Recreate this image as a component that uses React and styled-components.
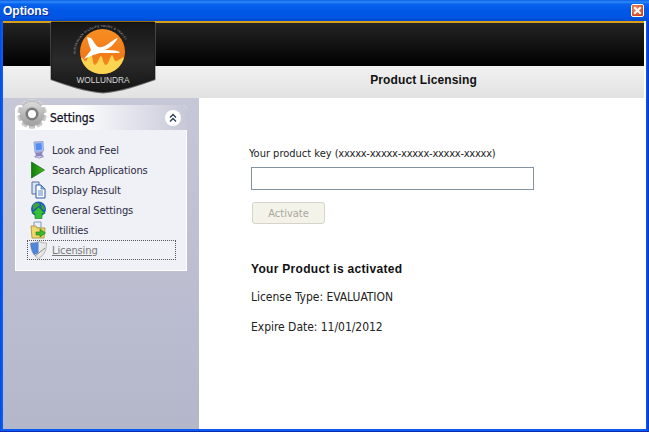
import React from "react";
import styled, { createGlobalStyle } from "styled-components";

const Global = createGlobalStyle`
  html, body { margin: 0; padding: 0; background: #fff; overflow: hidden; }
  * { box-sizing: border-box; }
`;
const Win = styled.div`
  width: 649px; height: 432px; display: flex; flex-direction: column; position: relative;
  font-family: "DejaVu Sans Condensed", "DejaVu Sans", sans-serif; font-size: 11px; color: #222;
  background: #0831d9;
`;
const TitleBar = styled.div`
  height: 21px; flex: none; display: flex; align-items: center; justify-content: space-between;
  padding: 1px 5px 0 3px;
  background: linear-gradient(180deg, #0a5fe4 0, #2f8bfa 2px, #0a63ee 4px, #0058e6 10px, #0056e4 17px, #0049cc 21px);
`;
const Title = styled.span`
  color: #fff; font: bold 12px "Liberation Sans", sans-serif; text-shadow: 1px 1px 0 #0b2f9e;
`;
const Close = styled.div`
  width: 13px; height: 13px; margin-top: -1px; border: 1px solid #fff; border-radius: 2px; display: flex; align-items: center; justify-content: center;
  background: radial-gradient(circle at 35% 35%, #f0966f, #d8481f 70%, #c23a18);
`;
const Frame = styled.div`
  flex: 1; display: flex; flex-direction: column; min-height: 0;
  padding: 0 3px 2px 3px;
  background: linear-gradient(90deg, #0649dd 0, #0a5cf5 2px, #0a5cf5 3px, #0a5cf5 calc(100% - 3px), #0535c4 100%);
  border-bottom: 1px solid #0a2ab0;
`;
const Inner = styled.div`
  flex: 1; display: flex; flex-direction: column; background: #fff; position: relative; min-height: 0;
`;
const Band = styled.div`
  height: 45px; flex: none; margin-right: 2px; border-top: 2px solid #d8a018;
  background: linear-gradient(180deg, #252525 0, #121212 50%, #000 100%);
`;
const Strip = styled.div`
  height: 32px; flex: none; margin-right: 2px; display: flex; align-items: center; padding-left: 196px; justify-content: center;
  background: linear-gradient(180deg, #f1f1f1, #e2e2e2);
`;
const StripTitle = styled.div`
  font: bold 12px "Liberation Sans", sans-serif; color: #111; position: relative; top: -2px; left: 2px; letter-spacing: 0.12px;
`;
const LogoWrap = styled.div`
  position: absolute; left: 47px; top: -1px; width: 110px; height: 76px;
`;
const Body = styled.div`
  flex: 1; display: flex; min-height: 0;
`;
const Side = styled.aside`
  width: 196px; flex: none; padding: 7px 12px 0 12px;
  background: linear-gradient(180deg, #c6c8d8, #b4b6ca);
`;
const Panel = styled.section`
  width: 172px; background: #eff1f6; border: 1px solid #fff; border-top: none; border-radius: 5px 5px 0 0; position: relative;
`;
const PanelHead = styled.div`
  height: 25px; margin: 0 -1px; border-radius: 5px 5px 0 0; display: flex; align-items: center; justify-content: space-between;
  padding: 0 6px 0 35px;
  background: linear-gradient(90deg, #fff 0, #fff 35%, #c6c8d8 100%);
  font: 12px "DejaVu Sans Condensed", "DejaVu Sans", sans-serif; color: #11111f;
  -webkit-text-stroke: 0.25px #11111f;
`;
const Gear = styled.div`
  position: absolute; left: 0; top: -7px; width: 32px; height: 32px;
`;
const Chevron = styled.div`
  width: 16px; height: 16px; border-radius: 50%; background: #fff; display: flex; align-items: center; justify-content: center;
`;
const List = styled.ul`
  list-style: none; margin: 0; padding: 10px 10px 10px 11px; display: flex; flex-direction: column;
`;
const Item = styled.li`
  height: 20px; display: flex; align-items: center; gap: 5px; padding-left: 2px;
  border: 1px ${p => (p.$active ? "dotted #555" : "solid transparent")};
  color: ${p => (p.$active ? "#777" : "#2c2a44")};
  text-decoration: ${p => (p.$active ? "underline" : "none")};
  font-size: 11px; letter-spacing: -0.1px;
  svg { flex: none; }
`;
const Main = styled.main`
  flex: 1; background: #fff; padding: 49px 0 0 50px; display: flex; flex-direction: column; align-items: flex-start;
`;
const KeyLabel = styled.label`
  font-size: 11px; color: #222; line-height: 14px;
`;
const KeyMask = styled.span`
  letter-spacing: -0.25px;
`;
const KeyInput = styled.div`
  margin: 6px 0 0 2px; width: 283px; height: 23px; background: #fff; border: 1px solid #84919f;
`;
const Btn = styled.button`
  margin: 12px 0 0 3px; width: 73px; height: 22px; background: #f4f3ea; border: 1px solid #d6d5c8; border-radius: 3px;
  color: #a8a79c; font: 11px "DejaVu Sans Condensed", "DejaVu Sans", sans-serif; padding: 0;
`;
const Status = styled.div`
  margin: 38px 0 0 2px; font: bold 12px "Liberation Sans", sans-serif; color: #111; letter-spacing: 0.3px;
`;
const Info = styled.div`
  margin: ${p => p.$top}px 0 0 2px; font-size: 12px; color: #222; letter-spacing: -0.03px;
`;

const Logo = () => (
  <svg width="110" height="76" viewBox="0 0 110 76">
    <defs>
      <linearGradient id="sh" x1="0" y1="0" x2="0" y2="1">
        <stop offset="0" stopColor="#161616" /><stop offset="0.55" stopColor="#2a2a2a" /><stop offset="1" stopColor="#161616" />
      </linearGradient>
      <linearGradient id="orb" x1="0" y1="0" x2="0" y2="1">
        <stop offset="0" stopColor="#f78e22" /><stop offset="0.6" stopColor="#f37a18" /><stop offset="1" stopColor="#f39a20" />
      </linearGradient>
      <path id="arc" d="M25.5 34 A 27 27 0 0 1 79.5 34" />
    </defs>
    <path d="M0.5 2 H105.5 V60 C88 66 72 72 53 73.5 C34 72 18 66 0.5 60 Z" fill="#6e6e6e" />
    <path d="M1.5 2 H104.5 V59 C87 65 71 70.5 53 72 C35 70.5 19 65 1.5 59 Z" fill="url(#sh)" stroke="#000" strokeWidth="0.6" />
    <text fontSize="3" fill="#b8b8b8" fontFamily="Liberation Sans, sans-serif" letterSpacing="0.3">
      <textPath href="#arc">AUSTRALIAN WILDLIFE TOURS &amp; TRAVEL</textPath>
    </text>
    <circle cx="52.5" cy="31.5" r="22.5" fill="url(#orb)" />
    <path d="M31 38 C33 37 34 42 36 41 C38 40 38 32 41 33 C43 35 42 44 45 45 C48 44 49 37 51 36 C53 37 53 45 56 45 C59 44 60 36 62 35 C64 37 64 42 67 41 C69 40 71 38 74 37 C73 45 64 54 52.5 54 C41 54 33 47 31 38 Z" fill="#fbd452" />
    <path d="M37 17 L41 18 C44 21 45 25 48 27 C52 28 55 26 58 24 C61 22 64 19 68 18 L66 21 C63 25 60 28 55 30 C60 30 65 30 70 32 L69 33 C62 33 56 33 50 33 C46 34 40 36 34 39 C36 36 39 33 41 30 C39 26 38 21 37 17 Z" fill="#fff" />
    <text x="53" y="63" textAnchor="middle" fontFamily="Liberation Sans, sans-serif" fontSize="8.5" fill="#d8d8d8" textLength="53" lengthAdjust="spacingAndGlyphs">WOLLUNDRA</text>
  </svg>
);

const GearIcon = () => {
  const teeth = Array.from({ length: 10 }, (_, i) => i * 36);
  return (
    <svg width="32" height="32" viewBox="0 0 32 32">
      <defs>
        <linearGradient id="g" x1="0" y1="0" x2="0" y2="1">
          <stop offset="0" stopColor="#dcdcdc" /><stop offset="0.5" stopColor="#b8b8b8" /><stop offset="1" stopColor="#a0a0a0" />
        </linearGradient>
      </defs>
      {teeth.map(a => <rect key={a} x="13" y="1" width="6" height="6" rx="1.5" fill="url(#g)" transform={`rotate(${a} 16 16)`} />)}
      <circle cx="16" cy="16" r="12" fill="url(#g)" />
      <circle cx="16" cy="16" r="6.5" fill="#7a7a7a" />
      <circle cx="16" cy="16" r="4" fill="#fff" />
    </svg>
  );
};

const Monitor = () => (
  <svg width="17" height="18" viewBox="0 0 17 18">
    <path d="M4 1 L13 0.5 L13.5 10 L5 11.5 Z" fill="#a9c3f4" stroke="#8f93c4" strokeWidth="0.8" />
    <path d="M5.5 2.5 L11.5 2 L12 8.5 L6 9.5 Z" fill="#4f8df2" />
    <path d="M5 12 L13 10.5 L12 13 L14 16 L9 17.5 L4 16 L6 14 Z" fill="#8f84bc" />
    <path d="M5 15.5 L13 15 L9 17 Z" fill="#d6d2e8" />
  </svg>
);
const Play = () => (
  <svg width="17" height="18" viewBox="0 0 17 18"><defs><linearGradient id="pl" x1="0" y1="0" x2="1" y2="0"><stop offset="0" stopColor="#0f7c10" /><stop offset="1" stopColor="#45bb1c" /></linearGradient></defs>
    <path d="M1.5 1 L14.5 9 L1.5 17 Z" fill="url(#pl)" stroke="#0b6a0b" strokeWidth="0.7" /></svg>
);
const Doc = () => (
  <svg width="17" height="18" viewBox="0 0 17 18">
    <path d="M2 1 H9 V13 H2 Z" fill="#d8e4f8" stroke="#5a6f98" />
    <path d="M6 4 H11 L15 8 V17 H6 Z" fill="#fff" stroke="#2c5aa8" />
    <path d="M11 4 V8 H15 Z" fill="#8db4e8" stroke="#2c5aa8" strokeWidth="0.6" />
    <path d="M8 10 H13 M8 12 H13 M8 14 H13" stroke="#5d86c8" />
  </svg>
);
const Globe = () => (
  <svg width="17" height="18" viewBox="0 0 17 18">
    <circle cx="8.5" cy="8" r="7.5" fill="#1f5fb8" />
    <path d="M3 4 C6 1 9 2 10 4 C8 6 5 7 3 9 Z M11 3 C13 4 15 6 15 9 L12 8 Z" fill="#3da43a" />
    <path d="M8.5 6 L15 12.5 H12 V17.5 H5 V12.5 H2 Z" fill="#35c035" stroke="#0f7a20" strokeWidth="0.6" />
  </svg>
);
const Util = () => (
  <svg width="17" height="18" viewBox="0 0 17 18">
    <path d="M4 1 H11 V7 H4 Z" fill="#e8eefc" stroke="#8a9ab8" />
    <path d="M1 5 H6 L7 7 H15 L14 17 H2 Z" fill="#f2d76a" stroke="#a08a30" strokeWidth="0.8" />
    <path d="M6 11 H10 V8 L15.5 12 L10 16 V14 H6 Z" fill="#3cb82e" stroke="#1d7a18" strokeWidth="0.6" />
  </svg>
);
const Shield = () => (
  <svg width="17" height="18" viewBox="0 0 17 18">
    <path d="M0.5 2 C5 2 8 1 9 0.5 C11 1.5 14 2 16.5 2 C16.5 9 14.5 14 8.5 17.5 C3 14 0.5 9 0.5 2 Z" fill="#e8e8e8" stroke="#9a9a9a" strokeWidth="0.7" />
    <path d="M0.5 2 C4 2 7 1.5 8.5 1 L8.5 12 L4 14 C2 11 0.5 7 0.5 2 Z" fill="#4f86d8" />
    <path d="M5 15 L15 7" stroke="#8a8a8a" strokeWidth="1" />
  </svg>
);

const items = [
  ["Look and Feel", Monitor], ["Search Applications", Play], ["Display Result", Doc],
  ["General Settings", Globe], ["Utilities", Util], ["Licensing", Shield],
];

export default function App() {
  return (
    <Win>
      <Global />
      <TitleBar>
        <Title>Options</Title>
        <Close>
          <svg width="9" height="9" viewBox="0 0 9 9"><path d="M1.2 1.2 L7.8 7.8 M7.8 1.2 L1.2 7.8" stroke="#fff" strokeWidth="2" /></svg>
        </Close>
      </TitleBar>
      <Frame>
        <Inner>
          <Band />
          <Strip><StripTitle>Product Licensing</StripTitle></Strip>
          <LogoWrap><Logo /></LogoWrap>
          <Body>
            <Side>
              <Panel>
                <Gear><GearIcon /></Gear>
                <PanelHead>
                  Settings
                  <Chevron>
                    <svg width="10" height="10" viewBox="0 0 10 10"><path d="M2 4.5 L5 1.5 L8 4.5 M2 8.5 L5 5.5 L8 8.5" fill="none" stroke="#2c3a5a" strokeWidth="1.3" /></svg>
                  </Chevron>
                </PanelHead>
                <List>
                  {items.map(([t, I], i) => (
                    <Item key={t} $active={i === 5}><I />{t}</Item>
                  ))}
                </List>
              </Panel>
            </Side>
            <Main>
              <KeyLabel>Your product key <KeyMask>(xxxxx-xxxxx-xxxxx-xxxxx-xxxxx)</KeyMask></KeyLabel>
              <KeyInput />
              <Btn disabled>Activate</Btn>
              <Status>Your Product is activated</Status>
              <Info $top={14}>License Type: EVALUATION</Info>
              <Info $top={16}>Expire Date: 11/01/2012</Info>
            </Main>
          </Body>
        </Inner>
      </Frame>
    </Win>
  );
}
